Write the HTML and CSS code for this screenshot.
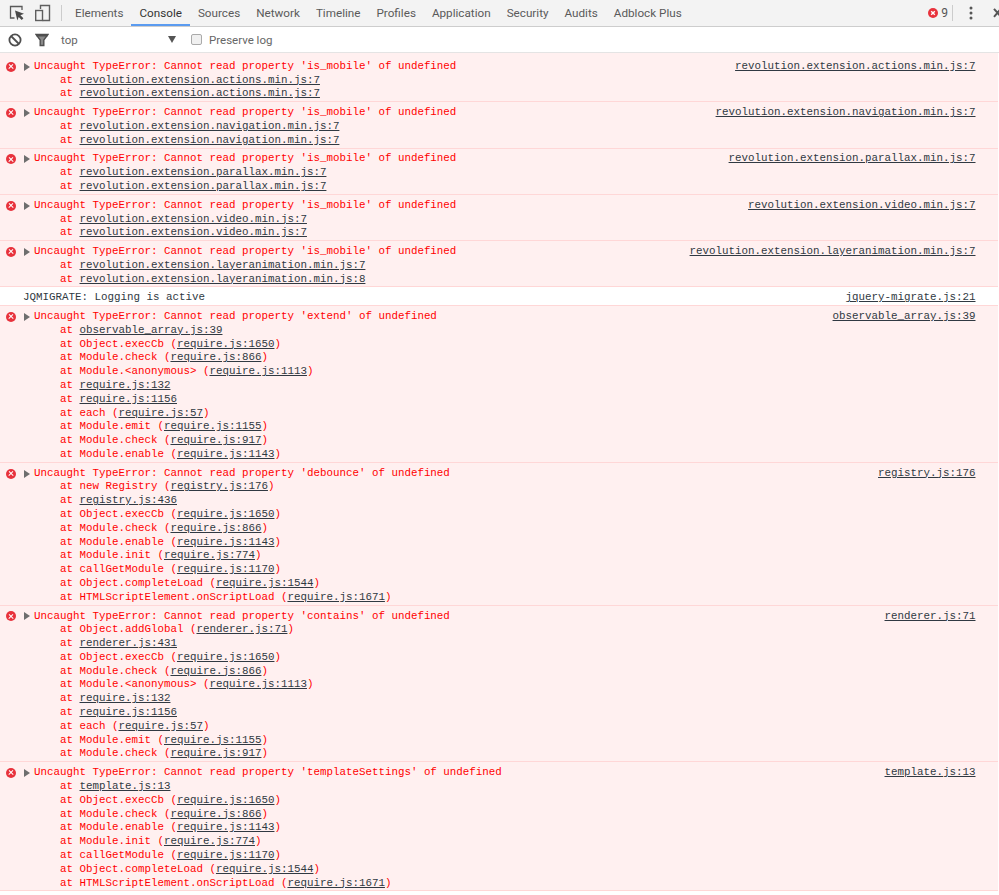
FILE: index.html
```html
<!DOCTYPE html>
<html lang="en">
<head>
<meta charset="utf-8">
<title>Console</title>
<link rel="stylesheet" href="styles.css">
</head>
<body>
<header class="tabbar">
  <svg class="ico inspect" width="16" height="16" viewBox="0 0 16 16"><path d="M5.500 13H1.500V1.500H13V5" fill="none" stroke="#5a5a5a" stroke-width="1.300"/><path d="M6 5.500l9 3.300-3.600 1.400 3 3-1.700 1.700-3-3-1.400 3.600z" fill="#4a4a4a"/></svg>
  <svg class="ico device" width="17" height="18" viewBox="0 0 17 18"><path d="M6.500 5V1.500H15.500V16.500H8.500" fill="none" stroke="#5f5f5f" stroke-width="1.400"/><rect x="1.700" y="6.500" width="6.800" height="10" fill="none" stroke="#5f5f5f" stroke-width="1.400"/></svg>
  <span class="vsep"></span>
  <nav class="tabs">
    <span class="tab">Elements</span>
    <span class="tab active">Console</span>
    <span class="tab">Sources</span>
    <span class="tab">Network</span>
    <span class="tab">Timeline</span>
    <span class="tab">Profiles</span>
    <span class="tab">Application</span>
    <span class="tab">Security</span>
    <span class="tab">Audits</span>
    <span class="tab">Adblock Plus</span>
  </nav>
  <div class="tab-right">
    <svg class="err-ico" width="10" height="10" viewBox="0 0 10 10"><circle cx="5" cy="5" r="5" fill="#e8323c"/><path d="M3.200 3.200l3.600 3.600M6.800 3.200l-3.600 3.600" stroke="#fff" stroke-width="1.400"/></svg>
    <span class="err-count">9</span>
    <span class="vsep2"></span>
    <svg class="dots" width="4" height="14" viewBox="0 0 4 14"><circle cx="2" cy="2" r="1.500" fill="#555"/><circle cx="2" cy="7" r="1.500" fill="#555"/><circle cx="2" cy="12" r="1.500" fill="#555"/></svg>
    <svg class="close" width="9" height="10" viewBox="0 0 9 10"><path d="M1 0.800l7 8M8 0.800l-7 8" stroke="#555" stroke-width="2"/></svg>
  </div>
</header>
<div class="filterbar">
  <svg class="ico block" width="14" height="14" viewBox="0 0 14 14"><circle cx="7" cy="7" r="5.600" fill="none" stroke="#4f4f4f" stroke-width="1.800"/><path d="M3 3l8 8" stroke="#4f4f4f" stroke-width="1.800"/></svg>
  <svg class="ico funnel" width="14" height="14" viewBox="0 0 14 14"><path d="M1 1.500h12L8.800 7v5.500H5.200V7z" fill="#8a8a8a" stroke="#4f4f4f" stroke-width="1.400"/><path d="M1.500 2h11v1.500h-11z" fill="#4f4f4f"/></svg>
  <span class="context">top</span>
  <span class="caret"></span>
  <span class="checkbox"></span>
  <span class="preserve">Preserve log</span>
</div>
<main class="console">
  <div class="msg err"><div class="line"><span class="xmark"></span><span class="tri"></span><span class="text">Uncaught TypeError: Cannot read property 'is_mobile' of undefined</span><a class="src">revolution.extension.actions.min.js:7</a></div>
    <div class="st">at <u>revolution.extension.actions.min.js:7</u></div>
    <div class="st">at <u>revolution.extension.actions.min.js:7</u></div></div>
  <div class="msg err"><div class="line"><span class="xmark"></span><span class="tri"></span><span class="text">Uncaught TypeError: Cannot read property 'is_mobile' of undefined</span><a class="src">revolution.extension.navigation.min.js:7</a></div>
    <div class="st">at <u>revolution.extension.navigation.min.js:7</u></div>
    <div class="st">at <u>revolution.extension.navigation.min.js:7</u></div></div>
  <div class="msg err"><div class="line"><span class="xmark"></span><span class="tri"></span><span class="text">Uncaught TypeError: Cannot read property 'is_mobile' of undefined</span><a class="src">revolution.extension.parallax.min.js:7</a></div>
    <div class="st">at <u>revolution.extension.parallax.min.js:7</u></div>
    <div class="st">at <u>revolution.extension.parallax.min.js:7</u></div></div>
  <div class="msg err"><div class="line"><span class="xmark"></span><span class="tri"></span><span class="text">Uncaught TypeError: Cannot read property 'is_mobile' of undefined</span><a class="src">revolution.extension.video.min.js:7</a></div>
    <div class="st">at <u>revolution.extension.video.min.js:7</u></div>
    <div class="st">at <u>revolution.extension.video.min.js:7</u></div></div>
  <div class="msg err"><div class="line"><span class="xmark"></span><span class="tri"></span><span class="text">Uncaught TypeError: Cannot read property 'is_mobile' of undefined</span><a class="src">revolution.extension.layeranimation.min.js:7</a></div>
    <div class="st">at <u>revolution.extension.layeranimation.min.js:7</u></div>
    <div class="st">at <u>revolution.extension.layeranimation.min.js:8</u></div></div>
  <div class="msg log"><div class="line"><span class="text">JQMIGRATE: Logging is active</span><a class="src">jquery-migrate.js:21</a></div></div>
  <div class="msg err"><div class="line"><span class="xmark"></span><span class="tri"></span><span class="text">Uncaught TypeError: Cannot read property 'extend' of undefined</span><a class="src">observable_array.js:39</a></div>
    <div class="st">at <u>observable_array.js:39</u></div>
    <div class="st">at Object.execCb (<u>require.js:1650</u>)</div>
    <div class="st">at Module.check (<u>require.js:866</u>)</div>
    <div class="st">at Module.&lt;anonymous&gt; (<u>require.js:1113</u>)</div>
    <div class="st">at <u>require.js:132</u></div>
    <div class="st">at <u>require.js:1156</u></div>
    <div class="st">at each (<u>require.js:57</u>)</div>
    <div class="st">at Module.emit (<u>require.js:1155</u>)</div>
    <div class="st">at Module.check (<u>require.js:917</u>)</div>
    <div class="st">at Module.enable (<u>require.js:1143</u>)</div></div>
  <div class="msg err"><div class="line"><span class="xmark"></span><span class="tri"></span><span class="text">Uncaught TypeError: Cannot read property 'debounce' of undefined</span><a class="src">registry.js:176</a></div>
    <div class="st">at new Registry (<u>registry.js:176</u>)</div>
    <div class="st">at <u>registry.js:436</u></div>
    <div class="st">at Object.execCb (<u>require.js:1650</u>)</div>
    <div class="st">at Module.check (<u>require.js:866</u>)</div>
    <div class="st">at Module.enable (<u>require.js:1143</u>)</div>
    <div class="st">at Module.init (<u>require.js:774</u>)</div>
    <div class="st">at callGetModule (<u>require.js:1170</u>)</div>
    <div class="st">at Object.completeLoad (<u>require.js:1544</u>)</div>
    <div class="st">at HTMLScriptElement.onScriptLoad (<u>require.js:1671</u>)</div></div>
  <div class="msg err"><div class="line"><span class="xmark"></span><span class="tri"></span><span class="text">Uncaught TypeError: Cannot read property 'contains' of undefined</span><a class="src">renderer.js:71</a></div>
    <div class="st">at Object.addGlobal (<u>renderer.js:71</u>)</div>
    <div class="st">at <u>renderer.js:431</u></div>
    <div class="st">at Object.execCb (<u>require.js:1650</u>)</div>
    <div class="st">at Module.check (<u>require.js:866</u>)</div>
    <div class="st">at Module.&lt;anonymous&gt; (<u>require.js:1113</u>)</div>
    <div class="st">at <u>require.js:132</u></div>
    <div class="st">at <u>require.js:1156</u></div>
    <div class="st">at each (<u>require.js:57</u>)</div>
    <div class="st">at Module.emit (<u>require.js:1155</u>)</div>
    <div class="st">at Module.check (<u>require.js:917</u>)</div></div>
  <div class="msg err"><div class="line"><span class="xmark"></span><span class="tri"></span><span class="text">Uncaught TypeError: Cannot read property 'templateSettings' of undefined</span><a class="src">template.js:13</a></div>
    <div class="st">at <u>template.js:13</u></div>
    <div class="st">at Object.execCb (<u>require.js:1650</u>)</div>
    <div class="st">at Module.check (<u>require.js:866</u>)</div>
    <div class="st">at Module.enable (<u>require.js:1143</u>)</div>
    <div class="st">at Module.init (<u>require.js:774</u>)</div>
    <div class="st">at callGetModule (<u>require.js:1170</u>)</div>
    <div class="st">at Object.completeLoad (<u>require.js:1544</u>)</div>
    <div class="st">at HTMLScriptElement.onScriptLoad (<u>require.js:1671</u>)</div></div>
</main>
</body>
</html>
```
FILE: styles.css
```css
* { box-sizing: border-box; }
html, body { margin: 0; height: 895px; overflow: hidden; background: #fff; }
body { font-family: Roboto, "Liberation Sans", sans-serif; }
.tabbar { display: flex; align-items: center; height: 27px; background: #f3f3f3; border-bottom: 1px solid #cdcdcd; }
.ico { flex: none; }
.inspect { margin-left: 9px; }
.device { margin-left: 9px; }
.vsep { width: 1px; height: 16px; background: #ccc; margin: 0 5px 0 10px; }
.tabs { display: flex; height: 26px; }
.tab { padding: 0 8px; font-size: 11.700px; line-height: 27px; color: #5a5a5a; }
.tab.active { color: #333; border-bottom: 2px solid #5a9bf0; }
.tab-right { display: flex; align-items: center; margin-left: auto; }
.err-count { font-size: 12px; color: #555; margin-left: 3px; }
.vsep2 { width: 1px; height: 16px; background: #ccc; margin: 0 16px 0 4px; }
.dots { margin-right: 20px; }
.close { margin-right: -3px; }
.filterbar { display: flex; align-items: center; height: 26px; background: #fff; font-size: 11.500px; color: #666; border-bottom: 1px solid #e4e4e4; }
.block { margin-left: 8px; }
.funnel { margin-left: 13px; }
.context { margin-left: 12px; width: 107px; }
.caret { width: 0; height: 0; border-left: 4.500px solid transparent; border-right: 4.500px solid transparent; border-top: 7px solid #555; }
.checkbox { width: 11px; height: 11px; margin-left: 15px; background: #f0f0f0; border: 1px solid #aaa; border-radius: 2px; }
.preserve { margin-left: 7px; }
.console { display: flex; flex-direction: column; padding-right: 1.500px; font-family: "Liberation Mono", monospace; font-size: 10.830px; line-height: 13.800px; }
.msg { padding: 3.900px 22px 0 0; border-bottom: 1px solid #ffd7d7; }
.msg:first-child { padding-top: 6.900px; }
.msg.err { background: #fff0f0; color: #f00; }
.msg.log { color: #303942; }
.line { display: flex; align-items: center; height: 13.800px; }
.xmark { flex: none; width: 10px; height: 10px; margin-left: 6px; border-radius: 50%; background: #e8323c; position: relative; }
.xmark::before, .xmark::after { content: ""; position: absolute; left: 2px; top: 4.300px; width: 6px; height: 1.400px; background: #fff; transform: rotate(45deg); }
.xmark::after { transform: rotate(-45deg); }
.tri { flex: none; width: 0; height: 0; margin-left: 8px; margin-right: 4px; border-top: 4px solid transparent; border-bottom: 4px solid transparent; border-left: 6px solid #6e6e6e; }
.log .text { margin-left: 23px; }
.text { flex: none; white-space: pre; }
.src { margin-left: auto; color: #303942; text-decoration: underline; white-space: pre; }
.st { padding-left: 60px; white-space: pre; }
.st u { color: #303942; }
```
